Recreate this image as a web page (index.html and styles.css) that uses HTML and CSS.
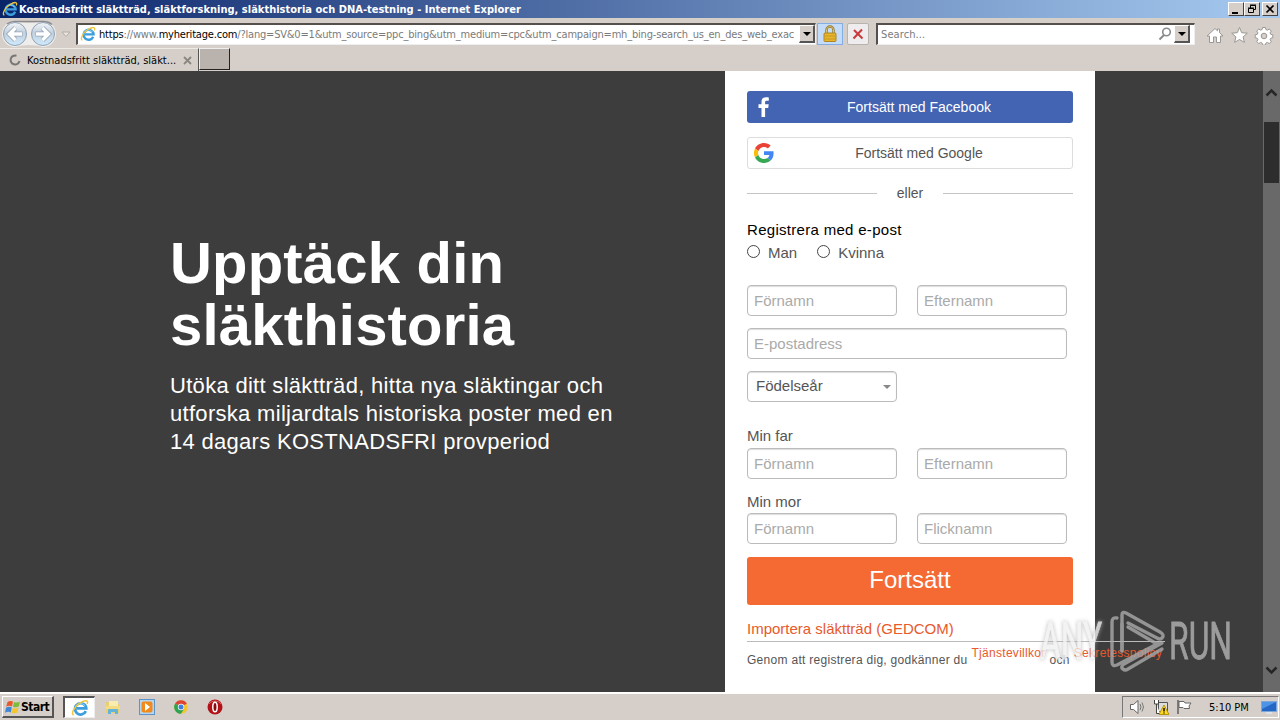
FILE: index.html
```
<!DOCTYPE html>
<html lang="sv">
<head>
    <meta charset="UTF-8">
    <title>Kostnadsfritt släktträd, släktforskning, släkthistoria och DNA-testning</title>
    <link rel="stylesheet" href="styles.css">
</head>
<body>
    <svg class="defs" width="0" height="0">
        <symbol id="ie" viewBox="0 0 16 16">
            <path d="M13.200 10.800A5 5 0 1 1 13.600 8.400H5" fill="none" stroke="#3d9ede" stroke-width="2.400"/>
            <path d="M4.200 6.500A4.900 4.900 0 0 1 12.500 6" fill="none" stroke="#8ed4f6" stroke-width=".9"/>
            <path d="M2.400 14.200C-.5 13.500 3 6.500 8 3.500s7.800-2.600 6.300 1" fill="none" stroke="#f0c63c" stroke-width="1.300"/>
        </symbol>
    </svg>

    <div class="titlebar">
        <svg class="title-icon" width="16" height="16"><use href="#ie"/></svg>
        <span class="title-text">Kostnadsfritt släktträd, släktforskning, släkthistoria och DNA-testning - Internet Explorer</span>
        <div class="win-buttons">
            <div class="win-btn"><svg width="14" height="12"><path d="M3 9h6v2H3z"/></svg></div>
            <div class="win-btn"><svg width="14" height="12"><path d="M5.500 5V2.500h5v4H9M5 2h6M3.500 5.500h5v4h-5zM3 5h6" fill="none" stroke="#000"/></svg></div>
            <div class="win-btn close"><svg width="14" height="12"><path d="M3.500 2.500l7 7M10.500 2.500l-7 7" stroke="#000" stroke-width="1.700"/></svg></div>
        </div>
    </div>

    <div class="navbar">
        <svg class="nav-arrows" width="74" height="28" viewBox="0 0 74 28">
            <defs>
                <linearGradient id="orb" x1="0" y1="0" x2="0" y2="1">
                    <stop offset="0" stop-color="#f4f6f8"/>
                    <stop offset=".45" stop-color="#c3d0de"/>
                    <stop offset="1" stop-color="#cfeafc"/>
                </linearGradient>
            </defs>
            <path d="M15 1q14 4 28 0a13 13 0 0 1 0 26q-14-4-28 0a13 13 0 0 1 0-26z" fill="#efedeb"/>
            <path d="M7 4q4-3 9-2.500h26q6-.5 10 3" fill="none" stroke="#8b8b90" stroke-width="1.500"/>
            <circle cx="15" cy="14" r="11.500" fill="url(#orb)" stroke="#8fa3b5"/>
            <circle cx="43" cy="14" r="11.500" fill="url(#orb)" stroke="#8fa3b5"/>
            <path d="M22.500 14H10M15.500 8l-6 6 6 6" fill="none" stroke="#93a3b6" stroke-width="5"/>
            <path d="M22 14H10M15.500 8l-6 6 6 6" fill="none" stroke="#fff" stroke-width="3.400"/>
            <path d="M35.500 14h12M42.500 8l6 6-6 6" fill="none" stroke="#93a3b6" stroke-width="5"/>
            <path d="M36 14h12M42.500 8l6 6-6 6" fill="none" stroke="#fff" stroke-width="3.400"/>
            <path d="M62 12h8l-4 4.500z" fill="#e8e4e0" stroke="#b3aca6"/>
        </svg>
        <div class="address">
            <svg width="16" height="16"><use href="#ie"/></svg>
            <span class="url"><b>https</b>://www.<b>myheritage.com</b>/?lang=SV&amp;0=1&amp;utm_source=ppc_bing&amp;utm_medium=cpc&amp;utm_campaign=mh_bing-search_us_en_des_web_exac</span>
            <div class="drop"></div>
        </div>
        <div class="lock">
            <svg width="16" height="18" viewBox="0 0 16 18">
                <path d="M4.500 9V5a3.500 3.500 0 0 1 7 0v4" fill="none" stroke="#8d7228" stroke-width="2.400"/>
                <path d="M4.500 9V5a3.500 3.500 0 0 1 7 0v4" fill="none" stroke="#dfc56d"/>
                <rect x="2" y="8" width="12" height="8.500" rx="1" fill="#e8b62c" stroke="#b08420"/>
                <path d="M2.500 11h11M2.500 14h11" stroke="#c89722"/>
            </svg>
        </div>
        <div class="stop">
            <svg width="12" height="12"><path d="M2 2l8.500 8.500M10 1.500L1.500 10.500" stroke="#c93a3f" stroke-width="2"/></svg>
        </div>
        <div class="search">
            <span>Search...</span>
            <svg width="14" height="14"><circle cx="8.500" cy="5" r="3.800" fill="none" stroke="#8a8a8a" stroke-width="1.600"/><path d="M6 8L1.500 12.500" stroke="#8a8a8a" stroke-width="2"/></svg>
            <div class="drop"></div>
        </div>
        <svg class="tools" width="70" height="20" viewBox="0 0 70 20">
            <g fill="#fff" stroke="#9b9793">
                <path d="M2 11L10 3.500l2.500 2.300V4h2v3.700L18 11h-2.500v6.500h-4V12h-3v5.500h-4V11z"/>
                <path d="M34.500 2.500l2.200 5.200 5.600.5-4.200 3.700 1.300 5.500-4.900-2.900-4.900 2.900 1.300-5.500-4.200-3.700 5.600-.5z"/>
                <path d="M57.500 2.500h3l.4 2 1.600.7 1.700-1.200 2.100 2.100-1.200 1.700.7 1.600 2 .4v3l-2 .4-.7 1.600 1.200 1.700-2.100 2.100-1.700-1.200-1.600.7-.4 2h-3l-.4-2-1.600-.7-1.700 1.200-2.100-2.100 1.200-1.700-.7-1.600-2-.4v-3l2-.4.7-1.600-1.200-1.700 2.100-2.100 1.700 1.200 1.600-.7z"/>
                <circle cx="59" cy="11" r="2.800" fill="#d6cfc9"/>
            </g>
        </svg>
    </div>

    <div class="tabbar">
        <div class="tab">
            <svg width="12" height="12"><path d="M10.500 7A4.500 4.500 0 1 1 7.500 1.700" fill="none" stroke="#777" stroke-width="2"/></svg>
            <span>Kostnadsfritt släktträd, släkt...</span>
            <svg class="tab-close" width="9" height="9"><path d="M1 1l7 7M8 1L1 8" stroke="#8b8680" stroke-width="1.800"/></svg>
        </div>
        <div class="new-tab"></div>
    </div>

    <div class="page">
        <div class="hero">
            <h1>Upptäck din<br>släkthistoria</h1>
            <p>Utöka ditt släktträd, hitta nya släktingar och<br>utforska miljardtals historiska poster med en<br>14 dagars KOSTNADSFRI provperiod</p>
        </div>

        <div class="signup">
            <div class="social facebook">
                <svg width="12" height="20" viewBox="0 0 12 20"><path d="M3.500 20v-9H.5V7.300h3V4.800C3.500 1.800 5.200.3 8 .3c1.300 0 2.500.1 2.800.2v3.200H8.900c-1.500 0-1.800.7-1.800 1.700v1.900h3.600l-.5 3.700H7.100v9z" fill="#fff"/></svg>
                <span>Fortsätt med Facebook</span>
            </div>
            <div class="social google">
                <svg width="20" height="20" viewBox="0 0 48 48">
                    <path fill="#ea4335" d="M24 9.500c3.540 0 6.710 1.220 9.210 3.600l6.850-6.850C35.900 2.380 30.470 0 24 0 14.620 0 6.510 5.380 2.560 13.220l7.980 6.190C12.430 13.720 17.740 9.500 24 9.500z"/>
                    <path fill="#4285f4" d="M46.980 24.550c0-1.570-.15-3.090-.38-4.550H24v9.020h12.940c-.58 2.960-2.260 5.480-4.780 7.180l7.730 6c4.510-4.180 7.090-10.360 7.090-17.650z"/>
                    <path fill="#fbbc05" d="M10.530 28.590a14.500 14.500 0 0 1 0-9.180l-7.980-6.190a24 24 0 0 0 0 21.560z"/>
                    <path fill="#34a853" d="M24 48c6.480 0 11.930-2.130 15.890-5.810l-7.730-6c-2.150 1.450-4.920 2.300-8.160 2.300-6.260 0-11.570-4.220-13.470-9.910l-7.980 6.190C6.510 42.620 14.620 48 24 48z"/>
                </svg>
                <span>Fortsätt med Google</span>
            </div>
            <div class="or"><span>eller</span></div>

            <div class="heading">Registrera med e-post</div>
            <div class="radios">
                <i class="radio"></i><span>Man</span>
                <i class="radio"></i><span>Kvinna</span>
            </div>

            <div class="row">
                <div class="field">Förnamn</div>
                <div class="field">Efternamn</div>
            </div>
            <div class="row">
                <div class="field">E-postadress</div>
            </div>
            <div class="row half">
                <div class="field select">Födelseår</div>
            </div>

            <div class="label father">Min far</div>
            <div class="row">
                <div class="field">Förnamn</div>
                <div class="field">Efternamn</div>
            </div>
            <div class="label">Min mor</div>
            <div class="row">
                <div class="field">Förnamn</div>
                <div class="field">Flicknamn</div>
            </div>

            <div class="submit">Fortsätt</div>
            <div class="import">Importera släktträd (GEDCOM)</div>
            <div class="terms">
                <span class="agree">Genom att registrera dig, godkänner du</span>
                <a>Tjänstevillkor</a>
                <span class="and">och</span>
                <a>Sekretesspolicy</a>
            </div>
        </div>

        <div class="scrollbar">
            <svg width="13" height="9"><path d="M1.500 7.500l5-5 5 5" fill="none" stroke="#262626" stroke-width="2.500"/></svg>
            <div class="thumb"></div>
            <svg class="down" width="13" height="9"><path d="M1.500 1.500l5 5 5-5" fill="none" stroke="#262626" stroke-width="2.500"/></svg>
        </div>

        <svg class="watermark" width="225" height="70" viewBox="0 0 225 70">
            <g class="wm-text">
                <text class="wm-any" x="5" y="52" textLength="62" lengthAdjust="spacingAndGlyphs">ANY</text>
                <text x="134" y="52" textLength="63" lengthAdjust="spacingAndGlyphs">RUN</text>
            </g>
            <g fill="none" stroke="#aaa" stroke-width="3.400" stroke-linejoin="round" stroke-linecap="round">
                <path d="M82 11q-5-1-5 4v40q0 5 5 3l42-22"/>
                <path d="M87 44V8q0-4 4-2l34 19q5 3 2 6-2 2-5 0L93 16"/>
                <path d="M87 17v27M93 20l29 17M127 36L89 57q-4 3-1 5 2 2 5 0l34-20"/>
            </g>
        </svg>
    </div>

    <div class="taskbar">
        <div class="start">
            <svg width="16" height="16" viewBox="0 0 16 16">
                <path d="M2.500 3Q5 1 8 2.600L7 7.500Q4 6 1.200 7.800z" fill="#e9582b"/>
                <path d="M9 3q3 1.300 6-.5l-1.300 5Q11 9 8 7.800z" fill="#7dbb3c"/>
                <path d="M1 8.800Q4 7 6.800 8.500l-1 5Q3 12 0 13.800z" fill="#3f87d6"/>
                <path d="M7.800 8.900q3 1.200 5.700-.4l-1.200 5Q9.500 15 6.700 13.800z" fill="#f6c52c"/>
            </svg>
            <span>Start</span>
        </div>
        <div class="task active"><svg width="18" height="18"><use href="#ie"/></svg></div>
        <div class="task">
            <svg width="16" height="16"><path d="M1 3h5l1 2h7v9H1z" fill="#e9cf72"/><path d="M4 2h9v5H4z" fill="#f8edb0"/><path d="M1 7h14v3H1z" fill="#f3dc83"/><path d="M3 15v-4q0-1 1-1h8q1 0 1 1v4h-3v-2H6v2z" fill="#64b4da"/></svg>
        </div>
        <div class="task">
            <svg width="16" height="16"><rect x=".5" y=".5" width="15" height="15" fill="#b7d5ee" stroke="#5d94c8"/><rect x="2.500" y="2.500" width="11" height="11" rx="2" fill="#f18a1c"/><path d="M6 4l5 4-5 4z" fill="#fff"/></svg>
        </div>
        <div class="task">
            <svg width="14" height="14" viewBox="0 0 14 14"><circle cx="7" cy="7" r="6.800" fill="#f4c52e"/><path d="M7 7L1.100 3.600A6.800 6.800 0 0 1 12.900 3.600z" fill="#dd4438"/><path d="M7 7L1.100 3.600A6.800 6.800 0 0 0 7 13.800l3-5z" fill="#2fa352"/><circle cx="7" cy="7" r="3.200" fill="#fff"/><circle cx="7" cy="7" r="2.500" fill="#3f7fe0"/></svg>
        </div>
        <div class="task">
            <svg width="16" height="16"><circle cx="8" cy="8" r="7.500" fill="#b01218"/><path d="M2 5a7 6 0 0 1 12 0" fill="none" stroke="#dc6060"/><ellipse cx="8" cy="8" rx="2.200" ry="4.800" fill="#8a0c10" stroke="#fff" stroke-width="1.500"/></svg>
        </div>
        <div class="tray">
            <svg width="17" height="16"><path d="M1.500 5.500h3L9 1.500v13l-4.500-4h-3z" fill="#fff" stroke="#666"/><path d="M11 5q2 3 0 6M13 3.500q3 4.500 0 9" fill="none" stroke="#777"/></svg>
            <svg width="16" height="16"><path d="M5.500 3.500h9v9h-9z" fill="#ddd" stroke="#555"/><path d="M1.500 1v4h4V1M3.500 5v9.500H7" fill="#fff" stroke="#444"/><path d="M11 6l5 9.500H6z" fill="#ffd91e" stroke="#b49310"/><path d="M11 9v3.500M11 13.500v1" stroke="#000" stroke-width="1.400"/></svg>
            <svg width="17" height="16"><path d="M2 1v14" stroke="#666" stroke-width="1.600"/><path d="M3 2.500h5l1 1.500h6l-2 3 .5 2.500H8L7 8.500H3z" fill="#fff" stroke="#666"/></svg>
            <span>5:10 PM</span>
            <svg class="desk" width="16" height="14"><rect x=".5" y="1.500" width="15" height="10" fill="#2467c4" stroke="#7ea6d6"/><path d="M1 2h14L1 9z" fill="#4d93e6"/><path d="M5 13h6" stroke="#dfe8f2" stroke-width="1.500"/></svg>
        </div>
    </div>
</body>
</html>
```
FILE: styles.css
```
* {
    box-sizing: border-box;
}
body {
    margin: 0;
    width: 1280px;
    height: 720px;
    overflow: hidden;
    display: flex;
    flex-direction: column;
    background-color: #d6cfc9;
    font-family: "Liberation Sans", Arial, sans-serif;
}
svg {
    display: block;
    flex: none;
}
.defs {
    position: absolute;
}
.titlebar, .navbar, .tabbar, .taskbar {
    font-family: "DejaVu Sans Condensed", "DejaVu Sans", sans-serif;
    font-size: 11px;
    white-space: nowrap;
    display: flex;
    flex: none;
}

/* title bar */
.titlebar {
    height: 18px;
    align-items: center;
    padding-left: 2px;
    background: linear-gradient(to right, #0a246a, #a6caf0);
    color: #fff;
}
.title-text {
    font-weight: bold;
    margin-left: 1px;
    letter-spacing: 0.01px;
}
.win-buttons {
    display: flex;
    margin-left: auto;
    padding-right: 2px;
}
.win-btn {
    width: 16px;
    height: 14px;
    background-color: #d6cfc9;
    border: 1px solid #fff;
    border-right-color: #444;
    border-bottom-color: #444;
}
.close {
    margin-left: 2px;
}

/* address row */
.navbar {
    height: 30px;
    align-items: center;
    border-top: 1px solid #d4d0c8;
}
.address, .search {
    display: flex;
    align-items: center;
    height: 22px;
    background-color: #fff;
    border: 1px solid #eee;
    border-top: 2px solid #55504c;
    border-left: 2px solid #55504c;
    color: #7b7b7b;
}
.address {
    width: 740px;
    margin-left: 2px;
    padding-left: 2px;
}
.url {
    flex: 1;
    overflow: hidden;
    margin-left: 3px;
    letter-spacing: -0.19px;
}
.url b {
    font-weight: normal;
    color: #000;
}
.drop {
    width: 16px;
    height: 18px;
    background-color: #d6cfc9;
    border: 1px solid #fff;
    border-right: 2px solid #555;
    border-bottom: 2px solid #555;
    display: flex;
    align-items: center;
    justify-content: center;
}
.drop::after {
    content: "";
    border: 4px solid transparent;
    border-top-color: #000;
    border-bottom: none;
}
.lock, .stop {
    display: flex;
    align-items: center;
    justify-content: center;
    height: 22px;
}
.lock {
    width: 26px;
    margin-left: 1px;
    background-color: #c5dcf8;
    border: 1px solid #83aee3;
}
.stop {
    width: 22px;
    margin-left: 4px;
    background-color: #eeecec;
    border: 1px solid #b9b3ae;
    border-radius: 2px;
}
.search {
    width: 319px;
    margin-left: 7px;
    padding-left: 3px;
    padding-right: 4px;
}
.search span {
    flex: 1;
    letter-spacing: 0.1px;
}
.search svg {
    margin-right: 2px;
}
.tools {
    margin-left: 10px;
    margin-top: 3px;
}

/* tabs */
.tabbar {
    height: 23px;
}
.tab {
    display: flex;
    align-items: center;
    width: 199px;
    padding-left: 9px;
    border-top: 1px solid #eeeae6;
    border-right: 1px solid #555;
}
.tab span {
    margin-left: 6px;
    width: 150px;
}
.tab-close {
    margin-left: 6px;
}
.new-tab {
    width: 31px;
    height: 22px;
    background-color: #bab2ac;
    border: 1px solid #eee;
    border-right: 1px solid #222;
    border-bottom: 1px solid #222;
}

/* web page */
.page {
    position: relative;
    height: 621px;
    flex: none;
    display: flex;
    background-color: #3d3d3d;
}
.hero {
    width: 725px;
    padding: 161px 0 0 170px;
    color: #fff;
}
.hero h1 {
    margin: 0;
    font-size: 58px;
    line-height: 62px;
    letter-spacing: 0.2px;
}
.hero p {
    margin: 16px 0 0;
    font-size: 22px;
    line-height: 28px;
    letter-spacing: 0.3px;
}
.signup {
    width: 370px;
    padding: 20px 22px 0;
    background-color: #fff;
    color: #555;
    font-size: 15px;
}
.social {
    display: flex;
    align-items: center;
    height: 32px;
    margin-bottom: 14px;
    border-radius: 3px;
    font-size: 14px;
}
.social span {
    flex: 1;
    text-align: center;
}
.facebook {
    background-color: #4264b2;
    color: #fff;
    padding-left: 11px;
}
.facebook span {
    padding-right: 5px;
}
.google {
    border: 1px solid #ddd;
    padding-left: 6px;
    margin-bottom: 0;
}
.google span {
    padding-right: 8px;
}
.or {
    display: flex;
    align-items: center;
    height: 48px;
    font-size: 14px;
}
.or span {
    width: 66px;
    text-align: center;
}
.or::before, .or::after {
    content: "";
    flex: 1;
    height: 1px;
    background-color: #c4c4c4;
}
.heading {
    height: 25px;
    line-height: 25px;
    color: #000;
    letter-spacing: 0.3px;
}
.radios {
    display: flex;
    align-items: center;
    height: 20px;
    margin-bottom: 23px;
}
.radio {
    width: 13px;
    height: 13px;
    border: 1px solid #444;
    border-radius: 50%;
    margin-right: 8px;
    margin-top: -1px;
}
.radios span {
    margin-right: 20px;
}
.row {
    display: flex;
    gap: 20px;
    width: 320px;
    margin-bottom: 12px;
}
.half {
    width: 150px;
}
.field {
    flex: 1;
    height: 31px;
    line-height: 30px;
    padding-left: 6px;
    border: 1px solid #bbb;
    border-radius: 4px;
    box-shadow: inset 0 1px 1px #ddd;
    color: #aaa;
}
.select {
    display: flex;
    justify-content: space-between;
    align-items: center;
    line-height: 28px;
    padding: 0 5px 2px 8px;
    color: #555;
}
.select::after {
    content: "";
    border: 4px solid transparent;
    border-top-color: #888;
    border-bottom: none;
    margin-top: 3px;
}
.label {
    height: 22px;
    line-height: 22px;
}
.father {
    margin: 23px 0 1px;
}
.submit {
    height: 48px;
    line-height: 46px;
    margin-top: 13px;
    border-radius: 3px;
    background-color: #f56932;
    color: #fff;
    font-size: 24px;
    text-align: center;
}
.import {
    width: 418px;
    height: 37px;
    line-height: 48px;
    border-bottom: 1px solid #bbb;
    color: #e8592c;
}
.terms {
    display: flex;
    width: 430px;
    font-size: 12px;
    line-height: 14px;
    letter-spacing: 0.29px;
    padding-top: 4px;
    white-space: nowrap;
}
.terms a {
    color: #e8592c;
    margin-left: 4px;
}
.agree, .and {
    padding-top: 7px;
}
.and {
    margin-left: 4px;
}
.scrollbar {
    width: 17px;
    margin-left: auto;
    padding: 17px 1px 0;
    background-color: #696969;
    display: flex;
    flex-direction: column;
    align-items: center;
}
.thumb {
    width: 15px;
    height: 61px;
    margin-top: 25px;
    background-color: #2d2d2d;
}
.down {
    margin-top: auto;
    margin-bottom: 17px;
}
/* overlay logo */
.watermark {
    position: absolute;
    left: 1035px;
    top: 536px;
    opacity: 0.8;
}
.wm-text {
    font-family: Roboto, sans-serif;
    font-size: 52px;
    fill: #b4b4b4;
    stroke: #b4b4b4;
    stroke-width: 0.8px;
}
.wm-any {
    fill: #f1f1f1;
    stroke: #f1f1f1;
    filter: drop-shadow(0 0 2px #aaa);
}

/* taskbar */
.taskbar {
    height: 28px;
    border-top: 2px solid #fff;
    align-items: center;
    padding-left: 2px;
}
.start {
    display: flex;
    align-items: center;
    width: 52px;
    height: 22px;
    padding-left: 2px;
    margin-right: 9px;
    border: 1px solid #fff;
    border-right: 2px solid #555;
    border-bottom: 2px solid #555;
    font-weight: bold;
    font-size: 12px;
    letter-spacing: -0.5px;
}
.task {
    display: flex;
    align-items: center;
    justify-content: center;
    width: 32px;
    height: 22px;
    margin-right: 2px;
}
.active {
    background-color: #fff;
    border: 1px solid #eee;
    border-top: 2px solid #555;
    border-left: 2px solid #555;
}
.tray {
    display: flex;
    align-items: center;
    width: 157px;
    height: 22px;
    margin-left: auto;
    margin-right: 1px;
    padding-left: 6px;
    border: 1px solid #fff;
    border-top-color: #777;
    border-left-color: #777;
}
.tray svg {
    margin-right: 7px;
}
.tray span {
    margin-left: 9px;
}
.tray .desk {
    margin-left: auto;
    margin-right: 1px;
}
```
